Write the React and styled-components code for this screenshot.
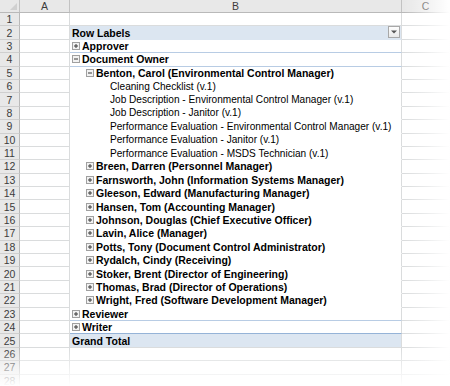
import React from 'react'
import styled, { createGlobalStyle } from 'styled-components'

const GlobalStyle = createGlobalStyle`
  html, body {
    margin: 0;
    padding: 0;
    background: #fff;
    overflow: hidden;
  }
  body {
    font-family: "Liberation Sans", Arial, sans-serif;
  }
`

const ROW_H = 13.4
const COLS = '20px 50px 332px 1fr'

const Sheet = styled.div`
  position: relative;
  width: 450px;
  height: 386px;
  overflow: hidden;
  background: #fff;
`

const HeaderRow = styled.div`
  display: grid;
  grid-template-columns: ${COLS};
  height: 13px;
  box-sizing: border-box;
  background: #e8e8e8;
  border-bottom: 1px solid #b9b9b9;
`

const Corner = styled.div`
  position: relative;
  border-right: 1px solid #c2c2c2;
  &::after {
    content: '';
    position: absolute;
    right: 2px;
    bottom: 2px;
    width: 0;
    height: 0;
    border-left: 7px solid transparent;
    border-bottom: 7px solid #d0d0d0;
  }
`

const ColHead = styled.div`
  display: flex;
  align-items: center;
  justify-content: center;
  font-size: 10.5px;
  color: #3c3c3c;
  border-right: 1px solid #c2c2c2;
`

const Row = styled.div`
  display: grid;
  grid-template-columns: ${COLS};
  height: ${ROW_H}px;
`

const RowNum = styled.div`
  display: flex;
  align-items: center;
  justify-content: center;
  box-sizing: border-box;
  font-size: 10.5px;
  color: #3c3c3c;
  background: #e8e8e8;
  border-right: 1px solid #b9b9b9;
  border-bottom: 1px solid #cfcfcf;
`

const Cell = styled.div`
  box-sizing: border-box;
  border-right: 1px solid #dadcdd;
  border-bottom: 1px solid #dadcdd;
`

const lineColor = {
  grid: '#dadcdd',
  none: 'transparent',
  light: '#b8cce4',
  dark: '#95b3d7',
}

const PivotCell = styled.div`
  position: relative;
  display: flex;
  align-items: center;
  box-sizing: border-box;
  padding-left: ${p => 2 + p.$indent}px;
  gap: 2px;
  font-size: ${p => (p.$bold ? 10.5 : 10.1)}px;
  font-weight: ${p => (p.$bold ? 700 : 400)};
  color: #000;
  white-space: nowrap;
  background: ${p => (p.$band ? '#dce6f1' : '#fff')};
  border-right: 1px solid #dadcdd;
  border-bottom: 1px solid ${p => lineColor[p.$line]};
`

const DropButton = styled.div`
  position: absolute;
  right: 1px;
  top: 0;
  width: 12px;
  height: 12px;
  box-sizing: border-box;
  display: flex;
  align-items: center;
  justify-content: center;
  background: linear-gradient(#fdfdfd, #e9e9e9);
  border: 1px solid #a8a8a8;
`

const FadeRight = styled.div`
  position: absolute;
  top: 0;
  right: 0;
  width: 46px;
  height: 100%;
  pointer-events: none;
  background: linear-gradient(to right, rgba(255, 255, 255, 0), rgba(255, 255, 255, 0.45) 50%, #fff);
`

const FadeBottom = styled.div`
  position: absolute;
  left: 0;
  bottom: 0;
  width: 100%;
  height: 38px;
  pointer-events: none;
  background: linear-gradient(to bottom, rgba(255, 255, 255, 0), rgba(255, 255, 255, 0.5) 50%, #fff);
`

const Toggle = ({ open }) => (
  <svg width="8" height="8" viewBox="0 0 8 8" style={{ flex: 'none' }}>
    <rect x="0.5" y="0.5" width="7" height="7" fill="#f2f2f2" stroke="#a0a0a0" />
    <line x1="2" y1="4" x2="6" y2="4" stroke="#3a3a3a" />
    {!open && <line x1="4" y1="2" x2="4" y2="6" stroke="#3a3a3a" />}
  </svg>
)

const Arrow = () => (
  <svg width="6" height="4" viewBox="0 0 6 4">
    <path d="M0 0.5h6L3 3.5z" fill="#555" />
  </svg>
)

const managers = [
  'Breen, Darren (Personnel Manager)',
  'Farnsworth, John (Information Systems Manager)',
  'Gleeson, Edward (Manufacturing Manager)',
  'Hansen, Tom (Accounting Manager)',
  'Johnson, Douglas (Chief Executive Officer)',
  'Lavin, Alice (Manager)',
  'Potts, Tony (Document Control Administrator)',
  'Rydalch, Cindy (Receiving)',
  'Stoker, Brent (Director of Engineering)',
  'Thomas, Brad (Director of Operations)',
  'Wright, Fred (Software Development Manager)',
]

const docs = [
  'Cleaning Checklist (v.1)',
  'Job Description - Environmental Control Manager (v.1)',
  'Job Description - Janitor (v.1)',
  'Performance Evaluation - Environmental Control Manager (v.1)',
  'Performance Evaluation - Janitor (v.1)',
  'Performance Evaluation - MSDS Technician (v.1)',
]

// one entry per spreadsheet row, from row 1 down
const rows = [
  { kind: 'empty', line: 'grid' },
  { kind: 'header', text: 'Row Labels', bold: true, band: true, line: 'none' },
  { text: 'Approver', level: 0, toggle: 'closed', bold: true, line: 'light' },
  { text: 'Document Owner', level: 0, toggle: 'open', bold: true, line: 'light' },
  { text: 'Benton, Carol (Environmental Control Manager)', level: 1, toggle: 'open', bold: true, line: 'none' },
  ...docs.map(text => ({ text, level: 2, line: 'none' })),
  ...managers.map(text => ({ text, level: 1, toggle: 'closed', bold: true, line: 'none' })),
  { text: 'Reviewer', level: 0, toggle: 'closed', bold: true, line: 'light' },
  { text: 'Writer', level: 0, toggle: 'closed', bold: true, line: 'dark' },
  { text: 'Grand Total', bold: true, band: true, line: 'grid' },
  { kind: 'empty', line: 'grid' },
  { kind: 'empty', line: 'grid' },
  { kind: 'empty', line: 'grid' },
]

const indents = [0, 14, 38]

const App = () => {
  return (
    <>
      <GlobalStyle />
      <Sheet>
        <HeaderRow>
          <Corner />
          <ColHead>A</ColHead>
          <ColHead>B</ColHead>
          <ColHead>C</ColHead>
        </HeaderRow>
        {rows.map((r, i) => (
          <Row key={i}>
            <RowNum>{i + 1}</RowNum>
            <Cell />
            <PivotCell
              $bold={r.bold}
              $band={r.band}
              $line={r.line}
              $indent={r.level != null ? indents[r.level] : 0}
            >
              {r.toggle && <Toggle open={r.toggle === 'open'} />}
              {r.text}
              {r.kind === 'header' && (
                <DropButton>
                  <Arrow />
                </DropButton>
              )}
            </PivotCell>
            <Cell />
          </Row>
        ))}
        <FadeRight />
        <FadeBottom />
      </Sheet>
    </>
  )
}

export default App
